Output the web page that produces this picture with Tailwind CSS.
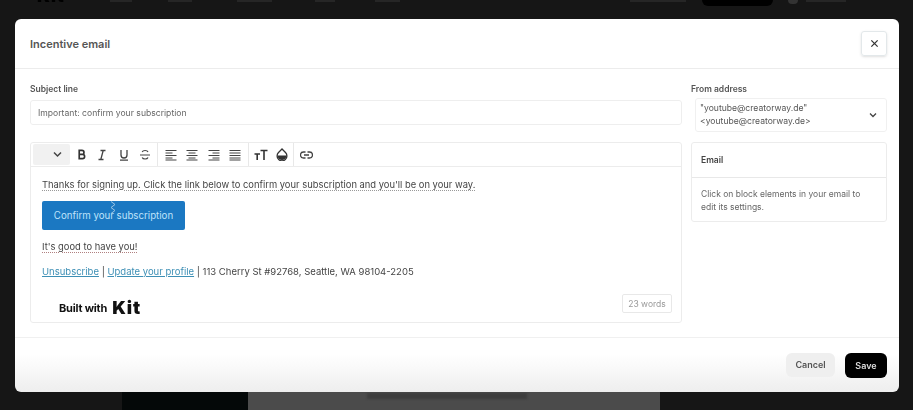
<!DOCTYPE html>
<html lang="en">
<head>
    <meta charset="UTF-8">
    <meta name="viewport" content="width=device-width, initial-scale=1.0">
    <title>Incentive email</title>
    <script src="https://cdn.jsdelivr.net/npm/@tailwindcss/browser@4"></script>
</head>
<body class="relative w-[913px] h-[410px] overflow-hidden bg-[#161616] font-['Inter','Liberation_Sans',sans-serif]">
    <!-- page behind the modal -->
    <div class="flex h-[19px] items-start blur-[0.5px]">
        <div class="ml-[37px] w-[36px] -mt-[12px] text-[17px] leading-[16px] font-black tracking-[1px] text-black">Kit</div>
        <div class="ml-[37px] h-[2px] w-[22px] bg-[#262626]"></div>
        <div class="ml-[36px] h-[2px] w-[24px] bg-[#262626]"></div>
        <div class="ml-[45px] h-[2px] w-[35px] bg-[#262626]"></div>
        <div class="ml-[43px] h-[2px] w-[20px] bg-[#262626]"></div>
        <div class="ml-[40px] h-[2px] w-[25px] bg-[#262626]"></div>
        <div class="ml-[230px] h-[2px] w-[56px] bg-[#262626]"></div>
        <div class="ml-[16px] h-[6px] w-[71px] rounded-b-md bg-black"></div>
        <div class="ml-[15px] h-[4px] w-[10px] rounded-b-full bg-[#333]"></div>
        <div class="ml-[8px] h-[2px] w-[40px] bg-[#262626]"></div>
    </div>
    <div class="absolute left-[122px] top-[392px] flex h-[18px]">
        <div class="w-[126px] bg-[#040808]"></div>
        <div class="flex w-[412px] justify-center bg-[#4b4b4b]">
            <div class="mr-[14px] mt-[1px] h-[6px] w-[160px] bg-[#3e3e3e] blur-[1px]"></div>
        </div>
    </div>

    <!-- modal -->
    <div class="absolute left-[15px] top-[19px] flex h-[373px] w-[884px] flex-col rounded-md bg-gradient-to-b from-white from-[90%] to-[#eeeeee] text-[#4a4a4a] blur-[0.3px]">
        <header class="flex h-[50px] shrink-0 items-center justify-between border-b border-[#ececec] pl-[15px] pr-[12px]">
            <h1 class="mt-[1px] text-[11px] font-semibold text-[#555]">Incentive email</h1>
            <button class="mt-[-1px] flex h-[25px] w-[26px] items-center justify-center rounded-[3px] border border-[#e3e8ea] shadow-sm">
                <svg class="h-[9px] w-[9px]" viewBox="0 0 10 10" fill="none" stroke="#333" stroke-width="1.4"><path d="M1.5 1.5l7 7M8.5 1.5l-7 7"/></svg>
            </button>
        </header>

        <div class="flex flex-1 gap-[9px] pl-[15px] pr-[12px]">
            <!-- left column -->
            <div class="w-[652px]">
                <label class="mt-[15px] block text-[8.5px] leading-[11px] font-semibold text-[#555]">Subject line</label>
                <div class="mt-[5px] flex h-[25px] items-center rounded-[3px] border border-[#eeeeee] pl-[7px] pt-[1px] text-[8.6px] text-[#666]">Important: confirm your subscription</div>

                <div class="mt-[17px] h-[181px] rounded-[3px] border border-[#ececec]">
                    <!-- toolbar -->
                    <div class="flex h-[24px] items-center border-b border-[#ececec] text-[#444]">
                        <div class="ml-[2px] flex h-[21px] w-[37px] items-center justify-end rounded-[2px] bg-[#f1f1f1] pr-[8px]">
                            <svg class="h-[7px] w-[9px]" viewBox="0 0 9 7" fill="none" stroke="#444" stroke-width="1.5"><path d="M1 1.5l3.5 3.500L8 1.5"/></svg>
                        </div>
                        <div class="flex h-full w-[88px] items-center justify-around border-r border-[#e8e8e8] px-[1px]">
                            <svg class="h-[11px] w-[11px]" viewBox="0 0 12 12" fill="none" stroke="#333" stroke-width="1.8"><path d="M3.5 1.5h3a2.2 2.2 0 0 1 0 4.4h-3zM3.5 5.9h3.6a2.3 2.3 0 0 1 0 4.6H3.5z"/></svg>
                            <svg class="h-[12px] w-[12px]" viewBox="0 0 12 12" fill="none" stroke="#444" stroke-width="1.3"><path d="M4.5 1.5h5M2.5 10.5h5M7.2 1.5l-2.4 9"/></svg>
                            <svg class="h-[12px] w-[12px]" viewBox="0 0 12 12" fill="none" stroke="#444" stroke-width="1.3"><path d="M3 1v5a3 3 0 0 0 6 0V1M2 11.2h8"/></svg>
                            <svg class="h-[12px] w-[12px]" viewBox="0 0 12 12" fill="none" stroke="#444" stroke-width="1.2"><path d="M9 3a3 2 0 0 0-5.800 0M1 6h10M3.200 8.500a3 2 0 0 0 5.800 0"/></svg>
                        </div>
                        <div class="flex h-full w-[91px] items-center justify-around border-r border-[#e8e8e8] px-[2px]">
                            <svg class="h-[12px] w-[12px]" viewBox="0 0 12 12" stroke="#444" stroke-width="1"><path d="M0.500 1.500h11M0.500 4h7M0.500 6.500h11M0.500 9h7M0.500 11h11"/></svg>
                            <svg class="h-[12px] w-[12px]" viewBox="0 0 12 12" stroke="#444" stroke-width="1"><path d="M0.500 1.500h11M2.500 4h7M0.500 6.500h11M2.500 9h7M0.500 11h11"/></svg>
                            <svg class="h-[12px] w-[12px]" viewBox="0 0 12 12" stroke="#444" stroke-width="1"><path d="M0.500 1.500h11M4.500 4h7M0.500 6.500h11M4.500 9h7M0.500 11h11"/></svg>
                            <svg class="h-[12px] w-[12px]" viewBox="0 0 12 12" stroke="#444" stroke-width="1.100"><path d="M0.500 1.500h11M0.500 4h11M0.500 6.500h11M0.500 9h11M0.500 11h11"/></svg>
                        </div>
                        <div class="flex h-full w-[45px] items-center justify-around border-r border-[#e8e8e8] px-[1px]">
                            <svg class="h-[13px] w-[14px]" viewBox="0 0 14 13" fill="none" stroke="#333" stroke-width="1.600"><path d="M6.500 2.500h7M10 2.500V12M0.500 6h5.500M3.200 6v6"/></svg>
                            <svg class="h-[13px] w-[12px]" viewBox="0 0 12 13"><path d="M6 1L2.500 4.500a4.900 4.900 0 1 0 7 0z" fill="none" stroke="#333" stroke-width="1.300"/><path d="M1.500 7.500h9a4.500 4.500 0 0 1-9 0z" fill="#333"/></svg>
                        </div>
                        <div class="flex w-[24px] justify-center">
                            <svg class="h-[10px] w-[13px]" viewBox="0 0 13 10" fill="none" stroke="#444" stroke-width="1.300"><path d="M5.500 2H3.500a3 3 0 0 0 0 6h2M7.500 2h2a3 3 0 0 1 0 6h-2M4 5h5"/></svg>
                        </div>
                    </div>
                    <!-- email body -->
                    <div class="relative px-[11px] pt-[11px] text-[9.4px] leading-[14px] text-[#444]">
                        <p class="underline decoration-dotted decoration-[#999] underline-offset-2">Thanks for signing up. Click the link below to confirm your subscription and you'll be on your way.</p>
                        <div class="relative mt-[9px] flex h-[29px] w-[143px] items-center justify-center rounded-[2px] bg-[#1b78c2] text-[9.7px] text-[#bfe3fb]">
                            Confirm your subscription
                            <svg class="absolute left-[68px] top-[0px] h-[13px] w-[6px]" viewBox="0 0 6 13" fill="none" stroke="#9cc5e4" stroke-width="1"><path d="M1 .5l4 3-4 3 4 3-4 3"/></svg>
                        </div>
                        <p class="mt-[10px] underline decoration-dotted decoration-[#b08080] underline-offset-2">It's good to have you!</p>
                        <p class="mt-[11px] text-[9.5px]"><span class="text-[#3d8fb5] underline">Unsubscribe</span> | <span class="text-[#3d8fb5] underline">Update your profile</span> | 113 Cherry St #92768, Seattle, WA 98104-2205</p>
                        <div class="mt-[20px] ml-[17px] flex items-center gap-[5px] leading-[18px] text-[#111]">
                            <span class="text-[11px] font-bold tracking-[-0.2px]">Built with</span>
                            <span class="text-[18px] font-black tracking-[1px]">Kit</span>
                        </div>
                        <div class="absolute right-[9px] top-[127px] flex h-[19px] w-[50px] items-center justify-center rounded-[2px] border border-[#e8e8e8] text-[8.5px] text-[#999]">23 words</div>
                    </div>
                </div>
            </div>

            <!-- right column -->
            <div class="w-[196px]">
                <label class="mt-[15px] block text-[8.5px] leading-[11px] font-semibold text-[#555]">From address</label>
                <div class="ml-[4px] mt-[3px] flex h-[34px] items-center justify-between rounded-[3px] border border-[#f0f0f0] pl-[4px] pr-[9px] text-[8.6px] leading-[13px] text-[#555]">
                    <span>"youtube@creatorway.de"<br>&lt;youtube@creatorway.de&gt;</span>
                    <svg class="h-[6px] w-[8px]" viewBox="0 0 8 6" fill="none" stroke="#444" stroke-width="1.300"><path d="M1 1.500l3 3 3-3"/></svg>
                </div>
                <div class="mt-[10px] h-[80px] rounded-[3px] border border-[#ececec]">
                    <div class="flex h-[35px] items-center border-b border-[#e8e8e8] pl-[9px] text-[8.5px] font-semibold text-[#444]">Email</div>
                    <p class="px-[9px] pt-[10px] text-[8.5px] leading-[12.500px] text-[#666]">Click on block elements in your email to edit its settings.</p>
                </div>
            </div>
        </div>

        <footer class="flex h-[55px] shrink-0 items-start justify-end gap-[10px] border-t border-[#f0f0f0] pr-[12px] pt-[15px]">
            <button class="h-[24px] w-[49px] rounded-md bg-[#efefef] text-[9px] font-semibold text-[#555]">Cancel</button>
            <button class="h-[25px] w-[42px] rounded-md bg-black text-[9px] font-semibold text-[#ddd]">Save</button>
        </footer>
    </div>
</body>
</html>
